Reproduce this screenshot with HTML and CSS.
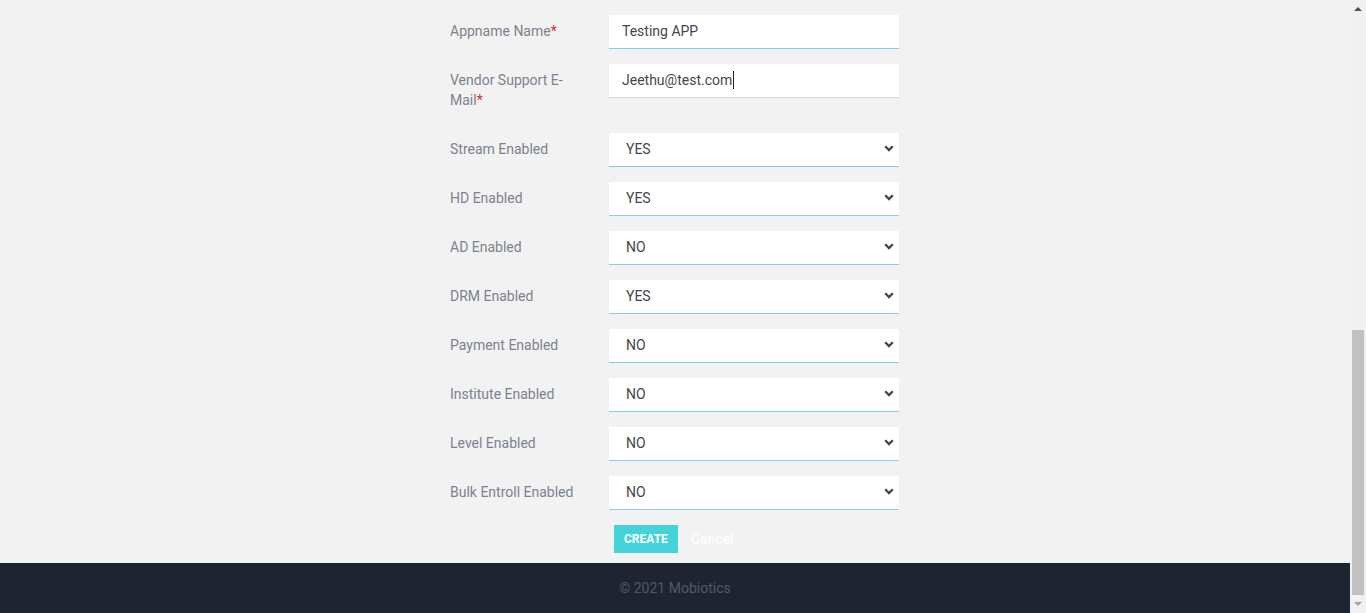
FILE: index.html
```html
<!DOCTYPE html>
<html lang="en">
<head>
<meta charset="utf-8">
<title>Create App</title>
<link rel="stylesheet" href="styles.css">
</head>
<body>
<div class="layout">
  <div class="content">
    <main class="page">
      <form class="app-form">
        <div class="row">
          <label class="label" for="appname">Appname Name<span class="req">*</span></label>
          <input class="field" id="appname" type="text" value="Testing APP">
        </div>
        <div class="row">
          <div class="label">Vendor Support E-<br>Mail<span class="req">*</span></div>
          <div class="field text-field">Jeethu@test.com<span class="caret"></span></div>
        </div>
        <div class="row">
          <label class="label">Stream Enabled</label>
          <div class="field select"><span>YES</span><svg class="chev" viewBox="0 0 10 7"><path d="M1.2 1.2l3.8 3.8 3.8-3.8" /></svg></div>
        </div>
        <div class="row">
          <label class="label">HD Enabled</label>
          <div class="field select"><span>YES</span><svg class="chev" viewBox="0 0 10 7"><path d="M1.2 1.2l3.8 3.8 3.8-3.8" /></svg></div>
        </div>
        <div class="row">
          <label class="label">AD Enabled</label>
          <div class="field select"><span>NO</span><svg class="chev" viewBox="0 0 10 7"><path d="M1.2 1.2l3.8 3.8 3.8-3.8" /></svg></div>
        </div>
        <div class="row">
          <label class="label">DRM Enabled</label>
          <div class="field select"><span>YES</span><svg class="chev" viewBox="0 0 10 7"><path d="M1.2 1.2l3.8 3.8 3.8-3.8" /></svg></div>
        </div>
        <div class="row">
          <label class="label">Payment Enabled</label>
          <div class="field select"><span>NO</span><svg class="chev" viewBox="0 0 10 7"><path d="M1.2 1.2l3.8 3.8 3.8-3.8" /></svg></div>
        </div>
        <div class="row">
          <label class="label">Institute Enabled</label>
          <div class="field select"><span>NO</span><svg class="chev" viewBox="0 0 10 7"><path d="M1.2 1.2l3.8 3.8 3.8-3.8" /></svg></div>
        </div>
        <div class="row">
          <label class="label">Level Enabled</label>
          <div class="field select"><span>NO</span><svg class="chev" viewBox="0 0 10 7"><path d="M1.2 1.2l3.8 3.8 3.8-3.8" /></svg></div>
        </div>
        <div class="row">
          <label class="label">Bulk Entroll Enabled</label>
          <div class="field select"><span>NO</span><svg class="chev" viewBox="0 0 10 7"><path d="M1.2 1.2l3.8 3.8 3.8-3.8" /></svg></div>
        </div>
        <div class="actions">
          <button type="button" class="btn-create">CREATE</button>
          <button type="button" class="btn-cancel">Cancel</button>
        </div>
      </form>
    </main>
    <footer class="footer">© 2021 Mobiotics</footer>
  </div>
  <div class="scrollbar">
    <svg class="arrow" viewBox="0 0 16 17"><path d="M4 11h8L8 7z" /></svg>
    <div class="track"><div class="thumb"></div></div>
    <svg class="arrow down" viewBox="0 0 16 17"><path d="M4 6h8l-4 4z" /></svg>
  </div>
</div>
</body>
</html>
```
FILE: styles.css
```css
html, body {
  margin: 0;
  height: 100%;
  overflow: hidden;
}
body {
  font-family: Roboto, "Liberation Sans", Arial, sans-serif;
  background: #f2f2f2;
}
.layout {
  display: grid;
  grid-template-columns: 1fr 16px;
  height: 613px;
}
.content {
  display: flex;
  flex-direction: column;
  min-width: 0;
}
.page {
  flex: 1;
  padding-top: 15px;
  display: flex;
  justify-content: center;
}
.app-form {
  width: 450px;
  display: flex;
  flex-direction: column;
  gap: 15px;
}
.row {
  display: flex;
  align-items: flex-start;
}
.label {
  width: 130px;
  flex: 0 0 130px;
  margin-right: 29px;
  padding: 6px 0 8px;
  font-size: 14px;
  line-height: 20px;
  color: #7c8290;
}
.req {
  color: #e0261b;
}
.field {
  box-sizing: border-box;
  width: 290px;
  height: 34px;
  border: none;
  border-bottom: 1px solid #7dd6dc;
  background: #fff;
  font-family: inherit;
  font-size: 14px;
  color: #45474c;
  padding: 0 13px 2px;
  outline: none;
  margin: 0;
}
.text-field {
  display: flex;
  align-items: center;
  border-bottom-color: #d8d8d8;
}
.caret {
  display: inline-block;
  width: 1px;
  height: 18px;
  background: #222;
  margin-left: 1px;
}
.select {
  display: flex;
  align-items: center;
  justify-content: space-between;
  padding: 0 5px 2px 17px;
  font-size: 14px;
}
.chev {
  width: 10px;
  height: 7px;
  fill: none;
  stroke: #454545;
  stroke-width: 2.3;
}
.actions {
  display: flex;
  align-items: center;
  gap: 13px;
  margin-left: 164px;
}
.btn-create {
  height: 28px;
  padding: 0 10px;
  border: none;
  background: #45d3da;
  color: #fff;
  font-family: inherit;
  font-weight: 700;
  font-size: 12px;
  cursor: pointer;
}
.btn-cancel {
  border: none;
  background: none;
  padding: 0;
  color: #fff;
  font-family: inherit;
  font-size: 14px;
  cursor: pointer;
}
.footer {
  height: 50px;
  flex: 0 0 50px;
  background: #1f2433;
  color: #4f5869;
  font-size: 14px;
  display: flex;
  align-items: center;
  justify-content: center;
  padding-bottom: 1px;
  box-sizing: border-box;
}
.scrollbar {
  background: #f1f1f1;
  display: flex;
  flex-direction: column;
}
.arrow {
  width: 16px;
  height: 17px;
  flex: 0 0 17px;
  fill: #505050;
}
.arrow.down {
  fill: #a3a3a3;
}
.track {
  flex: 1;
  display: flex;
  flex-direction: column;
  justify-content: flex-end;
  padding: 0 2px 1px;
}
.thumb {
  height: 265px;
  background: #c1c1c1;
}
```
